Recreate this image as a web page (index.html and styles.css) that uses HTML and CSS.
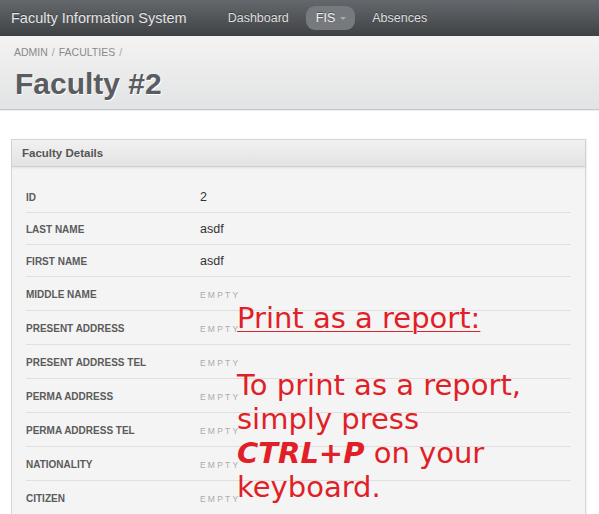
FILE: index.html
```html
<!DOCTYPE html>
<html lang="en">
<head>
<meta charset="utf-8">
<title>Faculty #2</title>
<link rel="stylesheet" href="styles.css">
</head>
<body>
<header class="navbar">
  <span class="brand">Faculty Information System</span>
  <nav class="nav">
    <a class="nav-link">Dashboard</a>
    <a class="nav-link nav-link--active">FIS <span class="caret"></span></a>
    <a class="nav-link">Absences</a>
  </nav>
</header>

<section class="page-header">
  <ol class="breadcrumb">
    <li>ADMIN</li><li class="divider">/</li><li>FACULTIES</li><li class="divider">/</li>
  </ol>
  <h1 class="title">Faculty #2</h1>
</section>

<main class="content">
  <div class="panel">
    <div class="panel-heading">Faculty Details</div>
    <div class="panel-body">
      <dl class="details">
        <div class="row"><dt>ID</dt><dd>2</dd></div>
        <div class="row"><dt>Last Name</dt><dd>asdf</dd></div>
        <div class="row"><dt>First Name</dt><dd>asdf</dd></div>
        <div class="row row--empty"><dt>Middle Name</dt><dd class="empty">Empty</dd></div>
        <div class="row row--empty"><dt>Present Address</dt><dd class="empty">Empty</dd></div>
        <div class="row row--empty"><dt>Present Address Tel</dt><dd class="empty">Empty</dd></div>
        <div class="row row--empty"><dt>Perma Address</dt><dd class="empty">Empty</dd></div>
        <div class="row row--empty"><dt>Perma Address Tel</dt><dd class="empty">Empty</dd></div>
        <div class="row row--empty"><dt>Nationality</dt><dd class="empty">Empty</dd></div>
        <div class="row row--empty row--last"><dt>Citizen</dt><dd class="empty">Empty</dd></div>
      </dl>
    </div>
  </div>
</main>

<aside class="print-note">
  <p class="print-note__title">Print as a report:</p>
  <p class="print-note__text">To print as a report,<br>simply press<br><b><i>CTRL+P</i></b> on your<br>keyboard.</p>
</aside>
</body>
</html>
```

FILE: styles.css
```css
* { box-sizing: border-box; }

html, body {
  margin: 0;
  padding: 0;
}

body {
  font-family: "Liberation Sans", Arial, sans-serif;
  background: #ffffff;
  color: #333;
  position: relative;
}

/* NAVBAR */
.navbar {
  height: 36px;
  display: flex;
  align-items: center;
  background: linear-gradient(#64686c, #3f4245);
  padding-left: 11px;
}

.brand {
  font-size: 14.5px;
  color: #e4e4e4;
  text-shadow: 0 -1px 0 rgba(0,0,0,0.3);
  white-space: nowrap;
}

.nav {
  display: flex;
  align-items: center;
  gap: 7px;
  margin-left: 31px;
}

.nav-link {
  font-size: 12.5px;
  color: #dedede;
  text-shadow: 0 -1px 0 rgba(0,0,0,0.35);
  padding: 0 10px;
  height: 24px;
  line-height: 24px;
  display: flex;
  align-items: center;
  white-space: nowrap;
}

.nav-link--active {
  background: #76797d;
  border-radius: 9px;
  color: #f2f2f2;
  padding: 0 9px 0 10px;
}

.caret {
  display: inline-block;
  width: 0;
  height: 0;
  margin-left: 5px;
  margin-top: 1px;
  border-left: 3px solid transparent;
  border-right: 3px solid transparent;
  border-top: 3px solid #a9acaf;
}

/* PAGE HEADER */
.page-header {
  background: linear-gradient(#f3f3f3, #e2e3e4);
  border-bottom: 1px solid #c6c6c6;
  box-shadow: 0 1px 1px rgba(0,0,0,0.06);
  padding: 9px 14px 7px 14px;
}

.breadcrumb {
  list-style: none;
  margin: 0;
  padding: 0;
  display: flex;
  font-size: 10.5px;
  line-height: 14px;
  color: #8a8a8a;
}

.breadcrumb .divider {
  padding: 0 4px;
  color: #a5a5a5;
}

.title {
  margin: 7px 0 0 1px;
  font-size: 30px;
  line-height: 36px;
  font-weight: bold;
  color: #595c61;
  text-shadow: 1px 1px 0 #ffffff;
}

/* CONTENT */
.content {
  padding: 29px 13px 0 11px;
}

.panel {
  border: 1px solid #d6d6d6;
  background: #f4f4f4;
  box-shadow: 1px 0 1px rgba(0,0,0,0.05);
}

.panel-heading {
  height: 27px;
  line-height: 26px;
  padding-left: 10px;
  font-size: 11.5px;
  font-weight: bold;
  color: #555;
  background: linear-gradient(#f1f1f1, #e3e3e3);
  border-bottom: 1px solid #cfcfcf;
  box-shadow: 0 1px 2px rgba(0,0,0,0.08);
}

.panel-body {
  padding: 14px 14px 0 14px;
}

.details {
  margin: 0;
}

.row {
  display: grid;
  grid-template-columns: 174px 1fr;
  align-items: center;
  height: 32px;
  padding-top: 1px;
  border-bottom: 1px solid #e0e0e0;
}

.row--empty {
  height: 34px;
}

.row--last {
  border-bottom: 0;
}

.row dt {
  font-size: 10px;
  font-weight: bold;
  text-transform: uppercase;
  color: #5b5b5b;
}

.row dd {
  margin: 0;
  font-size: 12.5px;
  color: #333;
}

.row dd.empty {
  font-size: 8.5px;
  letter-spacing: 2.2px;
  text-transform: uppercase;
  color: #ababab;
  padding-top: 1px;
}

/* PRINT NOTE (overlay) */
.print-note {
  position: absolute;
  left: 237px;
  top: 301px;
  font-family: "DejaVu Sans", Verdana, sans-serif;
  font-size: 29px;
  line-height: 34px;
  color: #e01f27;
  white-space: nowrap;
}

.print-note p {
  margin: 0;
}

.print-note__title {
  text-decoration: underline;
  text-decoration-thickness: 1px;
  text-underline-offset: 3px;
}

.print-note__text {
  margin-top: 33px !important;
}
```
